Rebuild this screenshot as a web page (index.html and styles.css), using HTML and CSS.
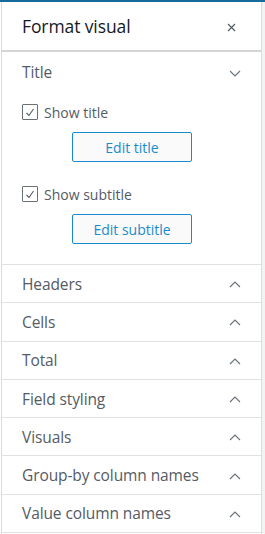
FILE: index.html
```html
<!DOCTYPE html>
<html>
<head>
<meta charset="utf-8">
<link rel="stylesheet" href="styles.css">
</head>
<body>
<div class="topbar"></div>
<div class="page">
  <div class="gutter"></div>
  <div class="panel">
    <div class="head">
      <span class="head-title">Format visual</span>
      <svg class="close" width="9" height="9" viewBox="0 0 9 9"><path d="M1 1L8 8M8 1L1 8" stroke="#545b64" stroke-width="1.2" fill="none"/></svg>
    </div>
    <div class="section open">
      <div class="sec-head">
        <span class="label">Title</span>
        <svg class="chev" width="12" height="7" viewBox="0 0 12 7"><path d="M1 1L6 6L11 1" stroke="#687078" stroke-width="1.1" fill="none"/></svg>
      </div>
      <div class="sec-body">
        <label class="check"><span class="box"><svg width="10" height="9" viewBox="0 0 10 9"><path d="M1.5 5L4 7.5L8.5 1" stroke="#545b64" stroke-width="1.1" fill="none"/></svg></span>Show title</label>
        <div class="btn-row"><button class="btn">Edit title</button></div>
        <label class="check"><span class="box"><svg width="10" height="9" viewBox="0 0 10 9"><path d="M1.5 5L4 7.5L8.5 1" stroke="#545b64" stroke-width="1.1" fill="none"/></svg></span>Show subtitle</label>
        <div class="btn-row"><button class="btn">Edit subtitle</button></div>
      </div>
    </div>
    <div class="row"><span class="label">Headers</span><svg class="chev" width="12" height="7" viewBox="0 0 12 7"><path d="M1 6L6 1L11 6" stroke="#687078" stroke-width="1.1" fill="none"/></svg></div>
    <div class="row"><span class="label">Cells</span><svg class="chev" width="12" height="7" viewBox="0 0 12 7"><path d="M1 6L6 1L11 6" stroke="#687078" stroke-width="1.1" fill="none"/></svg></div>
    <div class="row"><span class="label">Total</span><svg class="chev" width="12" height="7" viewBox="0 0 12 7"><path d="M1 6L6 1L11 6" stroke="#687078" stroke-width="1.1" fill="none"/></svg></div>
    <div class="row"><span class="label">Field styling</span><svg class="chev" width="12" height="7" viewBox="0 0 12 7"><path d="M1 6L6 1L11 6" stroke="#687078" stroke-width="1.1" fill="none"/></svg></div>
    <div class="row"><span class="label">Visuals</span><svg class="chev" width="12" height="7" viewBox="0 0 12 7"><path d="M1 6L6 1L11 6" stroke="#687078" stroke-width="1.1" fill="none"/></svg></div>
    <div class="row"><span class="label">Group-by column names</span><svg class="chev" width="12" height="7" viewBox="0 0 12 7"><path d="M1 6L6 1L11 6" stroke="#687078" stroke-width="1.1" fill="none"/></svg></div>
    <div class="row"><span class="label">Value column names</span><svg class="chev" width="12" height="7" viewBox="0 0 12 7"><path d="M1 6L6 1L11 6" stroke="#687078" stroke-width="1.1" fill="none"/></svg></div>
  </div>
  <div class="side"></div>
</div>
</body>
</html>
```
FILE: styles.css
```css
html, body {
  margin: 0;
  padding: 0;
  background: #ffffff;
  font-family: "Open Sans", "Noto Sans", sans-serif;
  overflow: hidden;
}
.topbar {
  height: 2px;
  background: #176b98;
}
.page {
  display: flex;
  height: 532px;
}
.gutter {
  width: 1px;
  background: #fff;
}
.panel {
  width: 259px;
  border-left: 1px solid #dcdcdc;
  border-right: 1px solid #dcdcdc;
  background: #fff;
  display: flex;
  flex-direction: column;
}
.side {
  flex: 1;
  background: #f2f3f3;
}
.head {
  border-bottom: 2px solid #d5d5d5;
  box-sizing: border-box;
  height: 50px;
  display: flex;
  align-items: center;
  justify-content: space-between;
  padding: 0 25px 0 20px;
}
.head-title {
  font-size: 17.5px;
  color: #16191f;
  letter-spacing: -0.1px;
}
.close {
  margin-top: 2px;
}
.label {
  font-size: 15.5px;
  color: #545b64;
  letter-spacing: -0.1px;
}
.section {
  border-bottom: 1px solid #e1e1e1;
}
.sec-head {
  height: 40px;
  display: flex;
  align-items: center;
  justify-content: space-between;
  padding: 0 20px 0 20px;
}
.sec-body {
  padding: 12px 0 20px 20px;
  display: flex;
  flex-direction: column;
}
.check {
  display: flex;
  align-items: center;
  font-size: 14px;
  color: #545b64;
  height: 16px;
}
.box {
  width: 16px;
  height: 16px;
  border: 1px solid #687078;
  border-radius: 1px;
  box-sizing: border-box;
  display: flex;
  align-items: center;
  justify-content: center;
  margin-right: 6px;
}
.btn-row {
  padding: 12px 0 24px 50px;
}
.section .btn-row:last-child {
  padding-bottom: 0;
}
.btn {
  display: block;
  width: 120px;
  height: 30px;
  border: 1px solid #1a8ccb;
  border-radius: 2px;
  background: #fafafa;
  color: #1a8ccb;
  font-family: "Open Sans", "Noto Sans", sans-serif;
  font-size: 14px;
  padding: 0;
}
.row {
  height: 38.3px;
  box-sizing: border-box;
  border-bottom: 1px solid #e1e1e1;
  display: flex;
  align-items: center;
  justify-content: space-between;
  padding: 0 20px 0 20px;
  flex-shrink: 0;
}
.chev {
  margin-top: 2px;
}
```
